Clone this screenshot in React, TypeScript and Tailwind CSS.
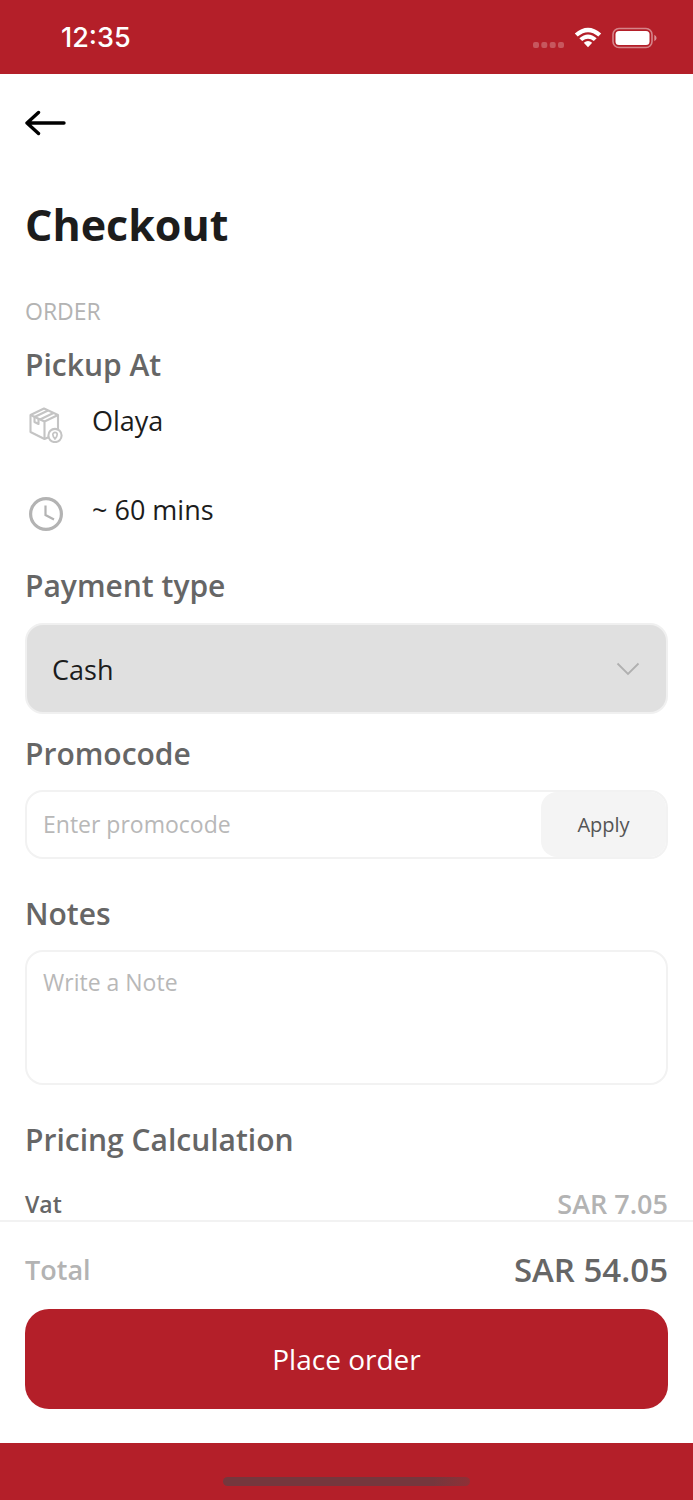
import type { ReactNode } from "react";

function StatusIcons() {
  return (
    <svg width="124" height="24" viewBox="0 0 124 24" fill="none" aria-hidden="true">
      <g fill="#fff" fillOpacity="0.25">
        <rect x="0" y="16" width="6" height="6" rx="2" />
        <rect x="8.3" y="16" width="6" height="6" rx="2" />
        <rect x="16.7" y="16" width="6" height="6" rx="2" />
        <rect x="25" y="16" width="6" height="6" rx="2" />
      </g>
      <g fill="#fff">
        <path d="M41.8 7.6 Q55 -4 68.2 7.6 L65.3 10.6 Q55 1.7 44.7 10.6 Z" />
        <path d="M46.3 12.2 Q55 4.6 63.7 12.2 L60.8 15.1 Q55 10.2 49.2 15.1 Z" />
        <path d="M50.8 16.8 Q55 13.2 59.2 16.8 L55 21.2 Z" />
      </g>
      <rect x="80" y="2.5" width="39" height="19" rx="6" stroke="#fff" strokeOpacity="0.45" strokeWidth="1.6" />
      <rect x="82.5" y="5" width="34" height="14" rx="3.5" fill="#fff" />
      <path d="M121.3 8.8 Q123.6 10 123.6 12 Q123.6 14 121.3 15.2 Z" fill="#fff" fillOpacity="0.5" />
    </svg>
  );
}

function BackIcon() {
  return (
    <svg width="42" height="26" viewBox="0 0 42 26" fill="none" stroke="#000" strokeWidth="3.4" strokeLinecap="round" strokeLinejoin="round" aria-hidden="true">
      <path d="M39 13H2M13.5 2.5L2 13l11.5 10.5" />
    </svg>
  );
}

function ParcelIcon() {
  return (
    <svg width="34" height="36" viewBox="0 0 34 36" fill="none" stroke="#c4c4c4" strokeWidth="2.1" strokeLinejoin="round" aria-hidden="true">
      <path d="M20 30L15.5 32L1.5 25V8L15 1.5L29 8V22" />
      <path d="M1.5 8L15.5 14.5L29 8M15.5 14.5V32" />
      <path d="M5.5 10L19 3.5M11 12.5L24.5 6M5.5 10V15L9.5 17V12" />
      <circle cx="26" cy="28.5" r="6.6" fill="#fff" />
      <path d="M26 32C24.2 29.9 23.8 28.8 23.8 27.6A2.2 2.2 0 0 1 28.2 27.6C28.2 28.8 27.8 29.9 26 32Z" strokeWidth="1.7" />
    </svg>
  );
}

function ClockIcon() {
  return (
    <svg width="34" height="36" viewBox="0 0 34 36" fill="none" stroke="#b3b3b3" aria-hidden="true">
      <circle cx="17" cy="18" r="15.4" strokeWidth="3.2" />
      <path d="M16.5 9.5V19L25 23.5" strokeWidth="2.2" />
    </svg>
  );
}

function SectionLabel({ htmlFor, children }: { htmlFor: string; children: ReactNode }) {
  return (
    <label htmlFor={htmlFor} className="block text-[30px] leading-10 font-semibold text-[#666]">
      {children}
    </label>
  );
}

export default function App() {
  return (
    <div className="flex min-h-screen flex-col bg-white font-['Open_Sans',sans-serif] text-[#1c1c1c]">
      <header className="flex h-[74px] items-center justify-between bg-[#b41f29] pt-[2px] pr-9 pl-[61px] text-white">
        <time className="font-['Inter',sans-serif] text-[27px] leading-8 font-medium">12:35</time>
        <StatusIcons />
      </header>

      <main className="flex flex-1 flex-col px-[25px] pt-9">
        <button type="button" aria-label="Back" className="flex h-[26px] w-[42px] items-center">
          <BackIcon />
        </button>
        <h1 className="mt-[59px] text-[43px] leading-[60px] font-bold">Checkout</h1>

        <section>
          <p className="mt-10 text-[23px] leading-8 text-[#b3b3b3]">ORDER</p>
          <h2 className="mt-[18px] text-[30px] leading-10 font-semibold text-[#666]">Pickup At</h2>
          <ul>
            <li className="mt-[18px] flex items-start gap-[29px] pl-1 text-[27px] leading-9">
              <span className="pt-1"><ParcelIcon /></span>
              Olaya
            </li>
            <li className="mt-[49px] flex items-start gap-[29px] pl-1 text-[27px] leading-9">
              <span className="pt-1"><ClockIcon /></span>
              ~ 60 mins
            </li>
          </ul>
        </section>

        <section className="mt-[34px]">
          <SectionLabel htmlFor="payment">Payment type</SectionLabel>
          <div className="mt-[17px] grid items-center">
            <select
              id="payment"
              className="col-start-1 row-start-1 h-[91px] w-full appearance-none rounded-[18px] border-2 border-[#f0f0f0] bg-[#e0e0e0] px-[25px] pt-1 text-[27px]"
            >
              <option>Cash</option>
            </select>
            <svg className="pointer-events-none col-start-1 row-start-1 mr-7 justify-self-end" width="24" height="14" viewBox="0 0 24 14" fill="none" stroke="#b0b0b0" strokeWidth="1.8" aria-hidden="true">
              <path d="M1.5 1.5L12 12L22.5 1.5" />
            </svg>
          </div>
        </section>

        <section className="mt-5">
          <SectionLabel htmlFor="promo">Promocode</SectionLabel>
          <div className="mt-4 flex h-[69px] rounded-[18px] border-2 border-[#f2f2f2]">
            <input
              id="promo"
              placeholder="Enter promocode"
              className="min-w-0 flex-1 rounded-l-[16px] px-4 text-[23px] outline-none placeholder:text-[#b8b8b8]"
            />
            <button type="button" className="w-[125px] rounded-[16px] bg-[#f4f4f4] text-[20px] text-[#555]">
              Apply
            </button>
          </div>
        </section>

        <section className="mt-[35px]">
          <SectionLabel htmlFor="notes">Notes</SectionLabel>
          <textarea
            id="notes"
            placeholder="Write a Note"
            className="mt-4 block h-[135px] w-full resize-none rounded-[18px] border-2 border-[#f2f2f2] px-4 py-[14px] text-[23px] leading-8 outline-none placeholder:text-[#b8b8b8]"
          />
        </section>

        <section className="mt-[35px]">
          <h2 className="text-[30px] leading-10 font-semibold text-[#666]">Pricing Calculation</h2>
          <div className="mt-7 flex items-center justify-between leading-8 font-semibold">
            <span className="text-[23px] text-[#666]">Vat</span>
            <span className="text-[27px] text-[#b3b3b3]">SAR 7.05</span>
          </div>
        </section>
      </main>

      <footer>
        <div className="border-t-2 border-[#f2f2f2] px-[25px] pt-6 pb-[34px]">
          <div className="flex items-center justify-between leading-[48px] font-semibold">
            <span className="text-[27px] text-[#b3b3b3]">Total</span>
            <span className="text-[33px] text-[#666]">SAR 54.05</span>
          </div>
          <button type="button" className="mt-[15px] h-[100px] w-full rounded-3xl bg-[#b41f29] text-[28px] text-white">
            Place order
          </button>
        </div>
        <div className="flex h-[57px] items-center justify-center bg-[#b41f29] pt-5">
          <span className="h-[9px] w-[247px] rounded-full bg-linear-to-r from-[#75373d] from-85% to-[#8f2f36]" />
        </div>
      </footer>
    </div>
  );
}
